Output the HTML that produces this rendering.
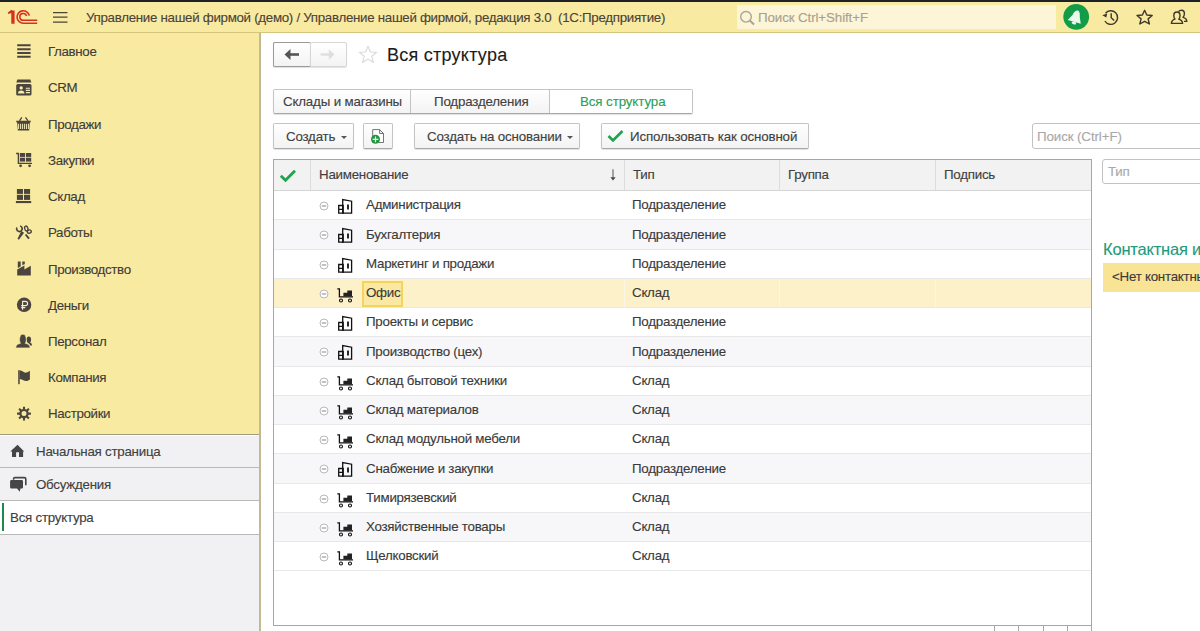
<!DOCTYPE html>
<html><head><meta charset="utf-8">
<style>
*{box-sizing:border-box;margin:0;padding:0}
html,body{width:1200px;height:631px;overflow:hidden;background:#fff;font-family:"Liberation Sans",sans-serif;font-size:13.33px;color:#404040}
.abs,.t,svg{position:absolute}
.t{white-space:nowrap;letter-spacing:-0.25px;line-height:16px;-webkit-text-stroke:0.12px currentColor}
#topbar{left:0;top:0;width:1200px;height:2px;background:#1e2224}
#hdr{left:0;top:2px;width:1200px;height:31px;background:#f9eaa2;border-bottom:1px solid #d4c47c}
#side{left:0;top:33px;width:261px;height:598px;background:#f1f0f2;border-right:2px solid #c2ba96}
#sideY{left:0;top:0;width:259px;height:401px;background:#f9eaa2}
.si{left:48px;color:#403c38;letter-spacing:-0.35px}
.srow{position:absolute;left:0;width:259px;border-bottom:1px solid #b9b9b9}
.btn{position:absolute;border:1px solid #c4c4c4;border-bottom-color:#a8a8a8;border-radius:2px;background:linear-gradient(#fff,#f3f3f3);box-shadow:0 1px 1px rgba(0,0,0,.12)}
.row{position:absolute;left:274px;width:817px;height:29.25px;border-bottom:1px solid #e8e8e8}
.row .n{left:92px;top:6.4px;color:#3a3a3a}
.row .ty{left:358px;top:6.4px;color:#3a3a3a}
</style></head><body>
<div id="topbar" class="abs"></div>
<div id="hdr" class="abs">
  <div class="t" style="left:86px;top:8px;color:#4a4336;letter-spacing:-0.3px">Управление нашей фирмой (демо) / Управление нашей фирмой, редакция 3.0&nbsp; (1С:Предприятие)</div>
  <div class="abs" style="left:737px;top:3px;width:319px;height:24px;background:#fcf5d8"></div>
  <div class="t" style="left:758px;top:8px;color:#a9a18c;letter-spacing:-0.1px">Поиск Ctrl+Shift+F</div>
</div>

<div id="side" class="abs">
  <div id="sideY" class="abs">
    <div class="t si" style="top:11px">Главное</div>
    <div class="t si" style="top:47px">CRM</div>
    <div class="t si" style="top:84px">Продажи</div>
    <div class="t si" style="top:120px">Закупки</div>
    <div class="t si" style="top:156px">Склад</div>
    <div class="t si" style="top:192px">Работы</div>
    <div class="t si" style="top:229px">Производство</div>
    <div class="t si" style="top:265px">Деньги</div>
    <div class="t si" style="top:301px">Персонал</div>
    <div class="t si" style="top:337px">Компания</div>
    <div class="t si" style="top:373px">Настройки</div>
  </div>
  <div class="srow" style="top:401px;height:34px"><div class="t" style="left:36px;top:10px">Начальная страница</div></div>
  <div class="srow" style="top:435px;height:33px"><div class="t" style="left:36px;top:8.6px">Обсуждения</div></div>
  <div class="srow" style="top:468px;height:34px;background:#fff"><div class="abs" style="left:2px;top:2px;width:2px;height:28px;background:#1d8a4a"></div><div class="t" style="left:10px;top:9px">Вся структура</div></div>
  <div class="abs" style="left:0;top:401px;width:259px;height:1px;background:#a29c7e"></div><div class="abs" style="left:0;top:402px;width:259px;height:1px;background:#fff"></div>
</div>

<div id="content" class="abs" style="left:261px;top:33px;width:939px;height:598px;background:#fff"></div>

<!-- nav buttons -->
<div class="btn" style="left:273px;top:42px;width:38px;height:25px;border-color:#9a9a9a;border-right-color:#bbb"></div>
<div class="btn" style="left:310px;top:42px;width:37px;height:25px;border-color:#d6d6d6"></div>
<svg style="left:284px;top:48px" width="16" height="13" viewBox="0 0 16 13"><path d="M15 6.5H5" stroke="#555" stroke-width="2.6"/><path d="M0.5 6.5L6.5 1V12Z" fill="#555"/></svg>
<svg style="left:320px;top:48px" width="16" height="13" viewBox="0 0 16 13"><path d="M0.5 6.5H9" stroke="#dedede" stroke-width="2.4"/><path d="M14.5 6.5L8.8 1.3V11.7Z" fill="#dedede"/></svg>
<svg style="left:358px;top:45px" width="20" height="19" viewBox="0 0 20 19"><path d="M10 1.2L12.4 7L18.6 7.3L13.8 11.3L15.4 17.5L10 14.1L4.6 17.5L6.2 11.3L1.4 7.3L7.6 7Z" fill="none" stroke="#dcdcdc" stroke-width="1.2" stroke-linejoin="round"/></svg>
<div class="t" style="left:387px;top:45.4px;font-size:18px;letter-spacing:0.25px;line-height:20px;color:#1c1c1c">Вся структура</div>

<!-- tabs -->
<div class="btn" style="left:273px;top:89px;width:420px;height:25px"></div>
<div class="abs" style="left:549px;top:90px;width:143px;height:23px;background:#fff;border-left:1px solid #c4c4c4"></div>
<div class="abs" style="left:410px;top:90px;width:1px;height:23px;background:#c4c4c4"></div>
<div class="t" style="left:283px;top:94px;letter-spacing:-0.17px">Склады и магазины</div>
<div class="t" style="left:434px;top:94px;letter-spacing:-0.18px">Подразделения</div>
<div class="t" style="left:580px;top:94px;color:#2aa05a;letter-spacing:-0.1px">Вся структура</div>

<!-- toolbar -->
<div class="btn" style="left:273px;top:123px;width:81px;height:26px"></div>
<div class="t" style="left:286px;top:129px;letter-spacing:-0.2px">Создать</div>
<svg style="left:341px;top:136px" width="6" height="4"><path d="M0 0H6L3 3Z" fill="#555"/></svg>
<div class="btn" style="left:363px;top:123px;width:30px;height:26px"></div>
<svg style="left:369px;top:128px" width="17" height="17" viewBox="0 0 17 17">
  <path d="M3.7 1.6H10.6L14.5 5.5V14.5H3.7Z" fill="#fff" stroke="#666" stroke-width="0.9"/>
  <path d="M10.6 1.6V5.5H14.5Z" fill="#f4f4f4" stroke="#666" stroke-width="0.9" stroke-linejoin="round"/>
  <circle cx="6.5" cy="11.3" r="4.5" fill="#22963f"/>
  <path d="M6.5 8.4V14.2M3.6 11.3H9.4" stroke="#e8f8ea" stroke-width="1.2"/>
</svg>
<div class="btn" style="left:414px;top:123px;width:166px;height:26px"></div>
<div class="t" style="left:427px;top:129px;letter-spacing:-0.18px">Создать на основании</div>
<svg style="left:567px;top:136px" width="6" height="4"><path d="M0 0H6L3 3Z" fill="#555"/></svg>
<div class="btn" style="left:601px;top:123px;width:208px;height:26px"></div>
<svg style="left:607px;top:129px" width="17" height="14" viewBox="0 0 17 14"><path d="M1.5 7L6 11.5L15.5 2" fill="none" stroke="#1fa350" stroke-width="2.6"/></svg>
<div class="t" style="left:630px;top:129px;letter-spacing:-0.14px">Использовать как основной</div>

<!-- search -->
<div class="abs" style="left:1032px;top:123px;width:180px;height:26px;border:1px solid #c2c2c2;border-radius:3px;background:#fff"></div>
<div class="t" style="left:1037px;top:129px;color:#a8a8a8;letter-spacing:-0.1px">Поиск (Ctrl+F)</div>

<!-- table -->
<div class="abs" style="left:273px;top:159px;width:819px;height:467px;border:1px solid #a6a6a6;background:#fff"></div>
<div class="abs" style="left:274px;top:160px;width:817px;height:31px;background:#f2f2f2;border-bottom:1px solid #d6d6d6"></div>
<div class="abs" style="left:310px;top:160px;width:1px;height:30px;background:#dcdcdc"></div>
<div class="abs" style="left:624px;top:160px;width:1px;height:30px;background:#dcdcdc"></div>
<div class="abs" style="left:779px;top:160px;width:1px;height:30px;background:#dcdcdc"></div>
<div class="abs" style="left:935px;top:160px;width:1px;height:30px;background:#dcdcdc"></div>
<svg style="left:279px;top:169px" width="18" height="14" viewBox="0 0 18 14"><path d="M1.8 6.8L6.5 11.3L16 1.8" fill="none" stroke="#1fa350" stroke-width="2.8"/></svg>
<div class="t" style="left:319px;top:167px">Наименование</div>
<svg style="left:609px;top:168px" width="8" height="14" viewBox="0 0 8 14"><path d="M4 1.2V10" stroke="#66667a" stroke-width="1.15"/><path d="M1.3 9.3H6.7L4 12.6Z" fill="#4a4a55"/></svg>
<div class="t" style="left:633px;top:167px">Тип</div>
<div class="t" style="left:788px;top:167px">Группа</div>
<div class="t" style="left:944px;top:167px">Подпись</div>

<div id="rows"><svg width="0" height="0" style="left:0;top:0"><defs>
<g id="ib" fill="none" stroke="#111" stroke-width="1.3"><path d="M2.7 7.5H7.2V15.2H2.7Z M2.7 11.3H7.2"/><path d="M6.7 15.2V1.5L15.6 3.2V15.2Z"/><path d="M12 6.5V11.5" stroke-width="1.8"/></g>
<g id="ic"><path d="M1.3 2.8H3.4V10.8H17" fill="none" stroke="#111" stroke-width="1.3"/><path d="M7.4 6.8H11.3V4.4H16V10.4H7.4Z" fill="#222"/><circle cx="5" cy="14.5" r="1.5" fill="none" stroke="#111" stroke-width="1.1"/><circle cx="14" cy="14.5" r="1.5" fill="none" stroke="#111" stroke-width="1.1"/></g>
</defs></svg><div class="row" style="top:191.00px;background:#fff"><svg style="left:45px;top:10px" width="10" height="10" viewBox="0 0 10 10"><circle cx="5" cy="5" r="4" fill="#fff" stroke="#b8b8b8" stroke-width="1"/><path d="M2.8 5H7.2" stroke="#999" stroke-width="1.2"/></svg><svg style="left:62px;top:7px" width="18" height="17" viewBox="0 0 18 17"><use href="#ib"/></svg><div class="t n">Администрация</div><div class="t ty">Подразделение</div></div><div class="row" style="top:220.25px;background:#f7f6f9"><svg style="left:45px;top:10px" width="10" height="10" viewBox="0 0 10 10"><circle cx="5" cy="5" r="4" fill="#fff" stroke="#b8b8b8" stroke-width="1"/><path d="M2.8 5H7.2" stroke="#999" stroke-width="1.2"/></svg><svg style="left:62px;top:7px" width="18" height="17" viewBox="0 0 18 17"><use href="#ib"/></svg><div class="t n">Бухгалтерия</div><div class="t ty">Подразделение</div></div><div class="row" style="top:249.50px;background:#fff"><svg style="left:45px;top:10px" width="10" height="10" viewBox="0 0 10 10"><circle cx="5" cy="5" r="4" fill="#fff" stroke="#b8b8b8" stroke-width="1"/><path d="M2.8 5H7.2" stroke="#999" stroke-width="1.2"/></svg><svg style="left:62px;top:7px" width="18" height="17" viewBox="0 0 18 17"><use href="#ib"/></svg><div class="t n">Маркетинг и продажи</div><div class="t ty">Подразделение</div></div><div class="row" style="top:278.75px;background:#fdf1c9"><div class="abs" style="left:88px;top:2px;width:41px;height:26px;border:2px solid #f2d55a;background:#fbe9a3"></div><div class="abs" style="left:350px;top:0;width:1px;height:28px;background:#fbf6e6"></div><div class="abs" style="left:505px;top:0;width:1px;height:28px;background:#fbf6e6"></div><div class="abs" style="left:661px;top:0;width:1px;height:28px;background:#fbf6e6"></div><svg style="left:45px;top:10px" width="10" height="10" viewBox="0 0 10 10"><circle cx="5" cy="5" r="4" fill="#fff" stroke="#b8b8b8" stroke-width="1"/><path d="M2.8 5H7.2" stroke="#999" stroke-width="1.2"/></svg><svg style="left:62px;top:7px" width="18" height="17" viewBox="0 0 18 17"><use href="#ic"/></svg><div class="t n">Офис</div><div class="t ty">Склад</div></div><div class="row" style="top:308.00px;background:#fff"><svg style="left:45px;top:10px" width="10" height="10" viewBox="0 0 10 10"><circle cx="5" cy="5" r="4" fill="#fff" stroke="#b8b8b8" stroke-width="1"/><path d="M2.8 5H7.2" stroke="#999" stroke-width="1.2"/></svg><svg style="left:62px;top:7px" width="18" height="17" viewBox="0 0 18 17"><use href="#ib"/></svg><div class="t n">Проекты и сервис</div><div class="t ty">Подразделение</div></div><div class="row" style="top:337.25px;background:#f7f6f9"><svg style="left:45px;top:10px" width="10" height="10" viewBox="0 0 10 10"><circle cx="5" cy="5" r="4" fill="#fff" stroke="#b8b8b8" stroke-width="1"/><path d="M2.8 5H7.2" stroke="#999" stroke-width="1.2"/></svg><svg style="left:62px;top:7px" width="18" height="17" viewBox="0 0 18 17"><use href="#ib"/></svg><div class="t n">Производство (цех)</div><div class="t ty">Подразделение</div></div><div class="row" style="top:366.50px;background:#fff"><svg style="left:45px;top:10px" width="10" height="10" viewBox="0 0 10 10"><circle cx="5" cy="5" r="4" fill="#fff" stroke="#b8b8b8" stroke-width="1"/><path d="M2.8 5H7.2" stroke="#999" stroke-width="1.2"/></svg><svg style="left:62px;top:7px" width="18" height="17" viewBox="0 0 18 17"><use href="#ic"/></svg><div class="t n">Склад бытовой техники</div><div class="t ty">Склад</div></div><div class="row" style="top:395.75px;background:#f7f6f9"><svg style="left:45px;top:10px" width="10" height="10" viewBox="0 0 10 10"><circle cx="5" cy="5" r="4" fill="#fff" stroke="#b8b8b8" stroke-width="1"/><path d="M2.8 5H7.2" stroke="#999" stroke-width="1.2"/></svg><svg style="left:62px;top:7px" width="18" height="17" viewBox="0 0 18 17"><use href="#ic"/></svg><div class="t n">Склад материалов</div><div class="t ty">Склад</div></div><div class="row" style="top:425.00px;background:#fff"><svg style="left:45px;top:10px" width="10" height="10" viewBox="0 0 10 10"><circle cx="5" cy="5" r="4" fill="#fff" stroke="#b8b8b8" stroke-width="1"/><path d="M2.8 5H7.2" stroke="#999" stroke-width="1.2"/></svg><svg style="left:62px;top:7px" width="18" height="17" viewBox="0 0 18 17"><use href="#ic"/></svg><div class="t n">Склад модульной мебели</div><div class="t ty">Склад</div></div><div class="row" style="top:454.25px;background:#f7f6f9"><svg style="left:45px;top:10px" width="10" height="10" viewBox="0 0 10 10"><circle cx="5" cy="5" r="4" fill="#fff" stroke="#b8b8b8" stroke-width="1"/><path d="M2.8 5H7.2" stroke="#999" stroke-width="1.2"/></svg><svg style="left:62px;top:7px" width="18" height="17" viewBox="0 0 18 17"><use href="#ib"/></svg><div class="t n">Снабжение и закупки</div><div class="t ty">Подразделение</div></div><div class="row" style="top:483.50px;background:#fff"><svg style="left:45px;top:10px" width="10" height="10" viewBox="0 0 10 10"><circle cx="5" cy="5" r="4" fill="#fff" stroke="#b8b8b8" stroke-width="1"/><path d="M2.8 5H7.2" stroke="#999" stroke-width="1.2"/></svg><svg style="left:62px;top:7px" width="18" height="17" viewBox="0 0 18 17"><use href="#ic"/></svg><div class="t n">Тимирязевский</div><div class="t ty">Склад</div></div><div class="row" style="top:512.75px;background:#f7f6f9"><svg style="left:45px;top:10px" width="10" height="10" viewBox="0 0 10 10"><circle cx="5" cy="5" r="4" fill="#fff" stroke="#b8b8b8" stroke-width="1"/><path d="M2.8 5H7.2" stroke="#999" stroke-width="1.2"/></svg><svg style="left:62px;top:7px" width="18" height="17" viewBox="0 0 18 17"><use href="#ic"/></svg><div class="t n">Хозяйственные товары</div><div class="t ty">Склад</div></div><div class="row" style="top:542.00px;background:#fff"><svg style="left:45px;top:10px" width="10" height="10" viewBox="0 0 10 10"><circle cx="5" cy="5" r="4" fill="#fff" stroke="#b8b8b8" stroke-width="1"/><path d="M2.8 5H7.2" stroke="#999" stroke-width="1.2"/></svg><svg style="left:62px;top:7px" width="18" height="17" viewBox="0 0 18 17"><use href="#ic"/></svg><div class="t n">Щелковский</div><div class="t ty">Склад</div></div></div>

<!-- bottom nav buttons -->
<div class="abs" style="left:994px;top:625px;width:98px;height:10px;border-left:1px solid #a6a6a6;border-right:1px solid #a6a6a6"></div>
<div class="abs" style="left:1018px;top:625px;width:1px;height:10px;background:#a6a6a6"></div>
<div class="abs" style="left:1043px;top:625px;width:1px;height:10px;background:#a6a6a6"></div>
<div class="abs" style="left:1067px;top:625px;width:1px;height:10px;background:#a6a6a6"></div>
<!-- right panel -->
<div class="abs" style="left:1102px;top:159px;width:110px;height:25px;border:1px solid #c2c2c2;border-radius:3px;background:#fff"></div>
<div class="t" style="left:1108px;top:164px;color:#a8a8a8">Тип</div>
<div class="t" style="left:1103px;top:239px;font-size:16.5px;line-height:20px;letter-spacing:-0.2px;color:#1f9a7c">Контактная информация</div>
<div class="abs" style="left:1103px;top:263px;width:110px;height:29px;background:#f9e496"></div>
<div class="t" style="left:1112px;top:269px;color:#3a3a3a">&lt;Нет контактных данных&gt;</div>
<svg id="ov" style="left:0;top:0;pointer-events:none" width="1200" height="631" viewBox="0 0 1200 631">
<!-- 1C logo -->
<g fill="none" stroke="#d6311e">
<path d="M8.3 13.6L11.5 10.6H14.6V23.8H11.3V13.2" fill="#d6311e" stroke="none"/>
<path d="M8.1 13.4L11.9 10.4" stroke-width="1.6"/>
<path d="M29.3 15.6A6.2 6.2 0 1 0 23.4 23.2H37.2" stroke-width="1.6"/>
<path d="M26.5 16A3.4 3.4 0 1 0 23.4 20.3H37.2" stroke-width="1.5"/>
</g>
<!-- hamburger -->
<path d="M53 12.5H67.5M53 17.2H67.5M53 22H67.5" stroke="#4a4336" stroke-width="1.25"/>
<!-- search magnifier -->
<circle cx="746" cy="16.8" r="5.3" fill="none" stroke="#aba48e" stroke-width="1.4"/>
<path d="M749.8 20.6L754 24.4" stroke="#aba48e" stroke-width="2"/>
<!-- bell -->
<circle cx="1076.2" cy="16.8" r="12.9" fill="#129c48"/>
<g transform="translate(0.7 0.7) rotate(17 1075 16.5)" fill="#e9f9ee">
<path d="M1075 9.6C1072.6 9.6 1071.8 12.5 1071.3 15.3L1068.2 21.4H1081.8L1078.9 15.3C1078.2 12.5 1077.4 9.6 1075 9.6Z"/>
<ellipse cx="1075" cy="22.6" rx="2.3" ry="1.4"/>
</g>
<!-- history -->
<g fill="none" stroke="#3d372c" stroke-width="1.4">
<path d="M1105.5 13.3A6.8 6.8 0 1 1 1104.9 21"/>
<path d="M1111.2 13.2V17.7L1114.2 20.6"/>
</g>
<path d="M1102.3 15.2L1107.2 13.6L1106.3 17.4Z" fill="#3d372c"/>
<!-- star -->
<path d="M1144.6 10.3L1146.8 15L1152.2 15.5L1148.1 18.9L1149.4 24L1144.6 21.3L1139.8 24L1141.1 18.9L1137 15.5L1142.4 15Z" fill="none" stroke="#3d372c" stroke-width="1.4" stroke-linejoin="round"/>
<!-- users -->
<g fill="none" stroke="#3d372c" stroke-width="1.4" stroke-linejoin="round">
<path d="M1171.4 23.4C1171.4 21 1172.3 20 1175 19.1C1174 18.3 1173.8 17 1173.8 15.4C1173.8 13.3 1175 12 1176.9 12C1178.8 12 1180 13.3 1180 15.4C1180 17 1179.8 18.3 1178.8 19.1C1181.5 20 1182.6 21 1182.6 23.4Z"/>
<path d="M1178.5 11.6C1179.2 10.6 1180.2 10.2 1181.5 10.2C1183.3 10.2 1184.4 11.6 1184.4 13.6C1184.4 15.2 1184 16.5 1183 17.3C1185.5 18 1186.8 19 1186.8 21.4H1184"/>
</g>

<!-- sidebar icons -->
<g fill="#4b453d">
<!-- Главное -->
<path d="M17.2 45.3H30.6M17.2 49.2H30.6M17.2 53H30.6M17.2 56.8H30.6" stroke="#4b453d" stroke-width="1.9"/>
<!-- CRM -->
<path d="M17.4 79.6H30.3L31.4 82.6H16.3Z"/>
<rect x="16.2" y="84" width="15.3" height="11.6" rx="1.6"/>
<circle cx="21.2" cy="87.9" r="1.7" fill="#f6eeb0"/>
<path d="M18 93.4C18 91.3 19.3 90.5 21.2 90.5C23.1 90.5 24.4 91.3 24.4 93.4Z" fill="#f6eeb0"/>
<path d="M25.8 88.2H30M25.8 90.4H30M25.8 92.6H30" stroke="#f1ebc0" stroke-width="1.1"/>
<!-- Продажи -->
<path d="M19.5 120.9L21.8 117.3M28 120.9L25.5 117.3" stroke="#4b453d" stroke-width="1.3"/>
<path d="M16.1 120.8H31L30.4 122.6H29.9L29.2 130.6H17.9L17.2 122.6H16.6Z"/>
<path d="M18.6 123.8V129M20.6 123.8V129M22.6 123.8V129M24.6 123.8V129M26.6 123.8V129M28.6 123.8V129" stroke="#f4ecc0" stroke-width="1"/>
<!-- Закупки -->
<path d="M16.1 153.5H18.4V163.4H32" fill="none" stroke="#4b453d" stroke-width="1.4"/>
<rect x="19.9" y="153" width="5.1" height="3.9"/><rect x="25.9" y="153" width="5.3" height="3.9"/>
<rect x="19.9" y="157.7" width="5.1" height="3.9"/><rect x="25.9" y="157.7" width="5.3" height="3.9"/>
<circle cx="20.6" cy="165.8" r="1.4"/><circle cx="29.6" cy="165.8" r="1.4"/>
<!-- Склад -->
<rect x="16.9" y="189" width="6.1" height="4.9"/><rect x="24" y="189" width="6.1" height="4.9"/>
<rect x="16.9" y="194.8" width="6.1" height="5.1"/><rect x="24" y="194.8" width="6.1" height="5.1"/>
<rect x="15.9" y="201" width="15.3" height="2.1"/>
<!-- Работы -->
<path d="M20.1 226A2.8 2.8 0 1 1 16.9 227.5" fill="none" stroke="#4b453d" stroke-width="1.7"/>
<path d="M21.3 230.9L24.1 232.8L18.9 239.7L17.5 238.7Z"/>
<ellipse cx="26.3" cy="228.5" rx="1.6" ry="2.5" fill="none" stroke="#4b453d" stroke-width="1.4" transform="rotate(-15 26.3 228.5)"/>
<ellipse cx="29.3" cy="231.6" rx="2" ry="1.6" fill="none" stroke="#4b453d" stroke-width="1.4" transform="rotate(-20 29.3 231.6)"/>
<path d="M25.6 234.5L29 238.7" stroke="#4b453d" stroke-width="1.9"/>
<!-- Производство -->
<path d="M17.8 261.6H20.7V266.5L17.8 268.1Z"/><path d="M22.3 261.6H24.8V263.9L22.3 265.3Z"/>
<path d="M17.2 275.6V269.6L24.4 265.6V269.4L30.8 265.8V275.6Z"/>
<!-- Деньги -->
<circle cx="24.1" cy="304.8" r="7.2"/>
<path d="M22.6 309.8V301.4H25.3C26.8 301.4 27.6 302.3 27.6 303.5C27.6 304.7 26.8 305.6 25.3 305.6H21.2M21.2 307.6H25.3" fill="none" stroke="#f4efd6" stroke-width="1.1"/>
<!-- Персонал -->
<path d="M27.6 342.8C27 342 26.6 340.9 26.6 339.6C26.6 337.8 27.6 336.6 28.9 336.6C30.2 336.6 31.1 337.8 31.1 339.6C31.1 340.9 30.7 342 30.1 342.6C31.3 343.1 32 343.8 32 345.4H30.2C29.8 344.1 28.9 343.4 27.6 342.8Z"/>
<path d="M15.9 347.9C15.9 345.2 17 344.4 20.6 343.3C19.9 342.5 19.6 341.2 19.6 339.3C19.6 336.1 21 334.2 22.9 334.2C24.8 334.2 26.2 336.1 26.2 339.3C26.2 341.2 25.9 342.5 25.2 343.3C28.9 344.4 30 345.2 30 347.9Z" stroke="#f6ecac" stroke-width="0.6"/>
<!-- Компания -->
<rect x="18.2" y="370.2" width="1.5" height="14"/>
<path d="M19.6 370.6C22 370 23.6 373.2 26.4 372.6C27.8 372.3 29 371.2 29.9 370.8V379.4C28.8 380 27.8 381 26.3 381C23.5 381 22 378.6 19.6 379.4Z"/>
<!-- Настройки -->
<g transform="translate(24 413.6)" stroke="#4b453d">
<circle r="3.6" fill="none" stroke-width="2.2"/>
<path d="M0 -4V-6.9M0 4V6.9M-4 0H-6.9M4 0H6.9M2.8 -2.8L4.9 -4.9M-2.8 2.8L-4.9 4.9M2.8 2.8L4.9 4.9M-2.8 -2.8L-4.9 -4.9" stroke-width="2.1"/>
</g>
</g>
<g fill="#454545">
<!-- home -->
<path d="M17.5 444.8L24.2 451.6H23.1V457H19V452.2H16.1V457H12V451.6H10.3Z"/>
<!-- chat -->
<path d="M13.6 479.8V478.6C13.6 477.9 14.1 477.6 14.8 477.6H24.4C25.2 477.6 25.8 478.1 25.8 478.9V485.2" fill="none" stroke="#454545" stroke-width="1.6"/>
<path d="M11.6 480H21.6C22.5 480 23 480.6 23 481.4V487.2C23 488 22.5 488.6 21.6 488.6H20.4L19.8 491.8L17 488.6H11.6C10.7 488.6 10.1 488 10.1 487.2V481.4C10.1 480.6 10.7 480 11.6 480Z"/>
</g>
</svg>
</body></html>
